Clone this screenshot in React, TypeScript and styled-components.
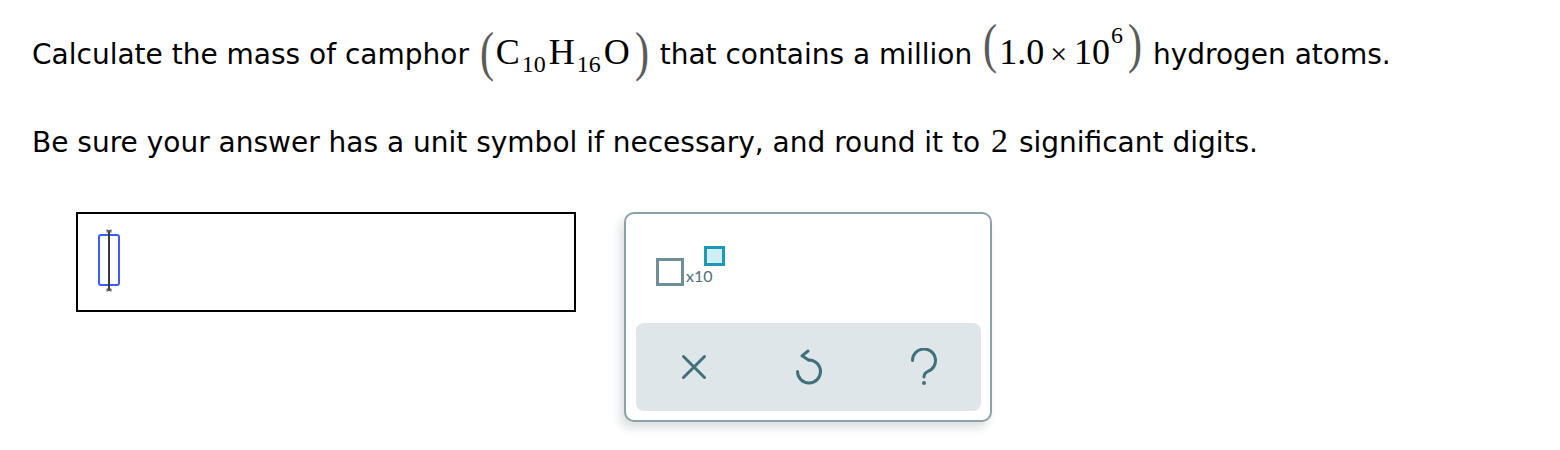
import React from "react";
import styled, { createGlobalStyle } from "styled-components";

const Global = createGlobalStyle`
  html, body { margin: 0; padding: 0; background: #ffffff; }
  body { font-family: "DejaVu Sans", Verdana, sans-serif; color: #000; }
`;

const Page = styled.div`
  width: 1560px;
  height: 450px;
  box-sizing: border-box;
  padding: 35px 0 0 32px;
  overflow: hidden;
`;

const Line = styled.p<{ $gap?: number }>`
  margin: ${(p) => p.$gap ?? 0}px 0 0 0;
  font-size: 28px;
  line-height: 40px;
  white-space: nowrap;
`;

const M = styled.span<{ $size?: number; $ml?: number; $mr?: number }>`
  font-family: "Liberation Serif", "Times New Roman", serif;
  font-size: ${(p) => p.$size ?? 36}px;
  line-height: 0;
  margin: 0 ${(p) => p.$mr ?? 0}px 0 ${(p) => p.$ml ?? 0}px;
`;

const Sub = styled.span`
  font-family: "Liberation Serif", "Times New Roman", serif;
  font-size: 24px;
  line-height: 0;
  vertical-align: -8px;
  margin: 0 3px 0 2px;
`;

const Sup = styled.span`
  font-family: "Liberation Serif", "Times New Roman", serif;
  font-size: 24px;
  line-height: 0;
  vertical-align: 21px;
  margin-left: 1px;
`;

const Paren = styled.span<{ $shift: number; $ml?: number }>`
  display: inline-block;
  font-family: "Liberation Serif", "Times New Roman", serif;
  font-size: 54px;
  line-height: 0;
  color: #5a5a5a;
  vertical-align: ${(p) => p.$shift}px;
  transform: scaleX(0.78);
  margin-left: ${(p) => p.$ml ?? 0}px;
`;

const Times = styled.span`
  font-family: "Liberation Serif", "Times New Roman", serif;
  font-size: 30px;
  line-height: 0;
  margin: 0 7px 0 6px;
`;

const AnswerRow = styled.div`
  display: flex;
  align-items: flex-start;
  gap: 48px;
  margin: 49px 0 0 44px;
`;

const AnswerBox = styled.div`
  width: 500px;
  height: 100px;
  box-sizing: border-box;
  border: 2px solid #000;
  padding: 15px 0 0 19px;
`;

const Panel = styled.div`
  width: 368px;
  height: 210px;
  box-sizing: border-box;
  border: 2px solid #8aa2aa;
  border-radius: 10px;
  background: #fff;
  box-shadow: -4px 6px 10px rgba(40, 60, 70, 0.16);
  padding: 0 9px 9px 10px;
  display: flex;
  flex-direction: column;
`;

const TemplateArea = styled.div`
  flex: 1;
  display: flex;
  align-items: flex-start;
  padding: 32px 0 0 20px;
`;

const BaseBox = styled.div`
  width: 28px;
  height: 28px;
  box-sizing: border-box;
  border: 3px solid #6e8e98;
  margin-top: 12px;
`;

const TimesTen = styled.span`
  font-family: Lato, "Open Sans", sans-serif;
  font-size: 16px;
  line-height: 16px;
  color: #4b6f7a;
  margin: 22px 0 0 2px;
`;

const ExpBox = styled.div`
  width: 21px;
  height: 20px;
  box-sizing: border-box;
  border: 3px solid #1a9ab6;
  background: #d0eff5;
  margin-left: -9px;
`;

const Bar = styled.div`
  height: 88px;
  background: #dfe6e9;
  border-radius: 8px;
  display: flex;
`;

const BarButton = styled.div`
  flex: 1;
  display: flex;
  align-items: center;
  justify-content: center;
  color: #41707d;
`;

const Cursor = () => (
  <svg width="26" height="64" viewBox="0 0 26 64">
    <rect x="2" y="6" width="20" height="50" rx="2" fill="none" stroke="#3d5cf6" strokeWidth="2" />
    <line x1="12" y1="2" x2="12" y2="61" stroke="#3a3a3a" strokeWidth="2" />
    <path d="M9.5 0.8 L14.5 3.2 M14.5 0.8 L9.5 3.2 M9.5 59.8 L14.5 62.2 M14.5 59.8 L9.5 62.2" stroke="#555" strokeWidth="1.3" />
  </svg>
);

const XIcon = () => (
  <svg width="26" height="26" viewBox="0 0 26 26">
    <path d="M2.5 2.5 L23.5 23.5 M23.5 2.5 L2.5 23.5" stroke="currentColor" strokeWidth="3" strokeLinecap="round" fill="none" />
  </svg>
);

const UndoIcon = () => (
  <svg width="30" height="36" viewBox="0 0 30 36">
    <path
      d="M15 11 A11.5 11.5 0 1 1 3.5 22.5"
      stroke="currentColor"
      strokeWidth="3"
      strokeLinecap="round"
      fill="none"
    />
    <path
      d="M14 2 L8 6.8 L14.5 11"
      stroke="currentColor"
      strokeWidth="3"
      strokeLinecap="round"
      strokeLinejoin="round"
      fill="none"
    />
  </svg>
);

const HelpIcon = () => (
  <svg width="28" height="38" viewBox="0 0 28 38">
    <path
      d="M2.5 12.5 A11.5 11.5 0 1 1 18 23.3 Q14 25 14 29"
      stroke="currentColor"
      strokeWidth="3"
      strokeLinecap="round"
      fill="none"
    />
    <circle cx="14" cy="35" r="2" fill="currentColor" />
  </svg>
);

export default function App() {
  return (
    <>
      <Global />
      <Page>
        <Line>
          Calculate the mass of camphor{" "}
          <Paren $shift={-6}>(</Paren>
          <M>C</M>
          <Sub>10</Sub>
          <M>H</M>
          <Sub>16</Sub>
          <M>O</M>
          <Paren $shift={-6} $ml={3}>)</Paren> that contains a million{" "}
          <Paren $shift={2}>(</Paren>
          <M>1.0</M>
          <Times>×</Times>
          <M>10</M>
          <Sup>6</Sup>
          <Paren $shift={2} $ml={3}>)</Paren> hydrogen atoms.
        </Line>
        <Line $gap={48}>
          Be sure your answer has a unit symbol if necessary, and round it to{" "}
          <M $size={34} $ml={2} $mr={2}>2</M> significant digits.
        </Line>
        <AnswerRow>
          <AnswerBox>
            <Cursor />
          </AnswerBox>
          <Panel>
            <TemplateArea>
              <BaseBox />
              <TimesTen>x10</TimesTen>
              <ExpBox />
            </TemplateArea>
            <Bar>
              <BarButton>
                <XIcon />
              </BarButton>
              <BarButton>
                <UndoIcon />
              </BarButton>
              <BarButton>
                <HelpIcon />
              </BarButton>
            </Bar>
          </Panel>
        </AnswerRow>
      </Page>
    </>
  );
}
